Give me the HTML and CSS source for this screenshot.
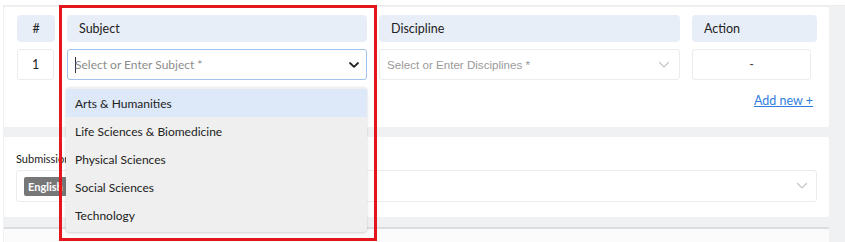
FILE: index.html
```html
<!DOCTYPE html>
<html>
<head>
<meta charset="utf-8">
<link rel="stylesheet" href="styles.css">
</head>
<body>
<div class="page">
  <div class="content">
    <section class="card card-table">
      <div class="grid">
        <div class="th th-num">#</div>
        <div class="th">Subject</div>
        <div class="th">Discipline</div>
        <div class="th">Action</div>

        <div class="td td-num">1</div>
        <div class="subject-cell">
          <div class="select select-active">
            <span class="caret"></span>
            <span class="placeholder">Select or Enter Subject *</span>
            <svg class="chev" width="12" height="8" viewBox="0 0 12 8"><path d="M2 2 L6 5.8 L10 2" fill="none" stroke="#222" stroke-width="1.8" stroke-linecap="round" stroke-linejoin="round"/></svg>
          </div>
          <ul class="menu">
            <li class="item active">Arts &amp; Humanities</li>
            <li class="item">Life Sciences &amp; Biomedicine</li>
            <li class="item">Physical Sciences</li>
            <li class="item">Social Sciences</li>
            <li class="item">Technology</li>
          </ul>
        </div>
        <div class="select select-plain">
          <span class="placeholder ph-sys">Select or Enter Disciplines *</span>
          <svg class="chev" width="12" height="8" viewBox="0 0 12 8"><path d="M1.5 1.5 L6 6 L10.5 1.5" fill="none" stroke="#c4c4c4" stroke-width="1.2" stroke-linecap="round"/></svg>
        </div>
        <div class="td td-action">-</div>
      </div>
      <div class="add-row"><a class="add-link" href="#">Add new +</a></div>
    </section>

    <section class="card card-lang">
      <div class="label">Submission Language</div>
      <div class="select select-plain lang-select">
        <span class="tag">English</span>
        <svg class="chev" width="12" height="8" viewBox="0 0 12 8"><path d="M1.5 1.5 L6 6 L10.5 1.5" fill="none" stroke="#c4c4c4" stroke-width="1.2" stroke-linecap="round"/></svg>
      </div>
    </section>
    <div class="bottom"></div>
  </div>
</div>
<div class="highlight"></div>
</body>
</html>
```

FILE: styles.css
```css
* { box-sizing: border-box; }
html, body { margin: 0; padding: 0; }
body {
  background: #ffffff;
  font-family: "Lato", "Noto Sans", sans-serif;
  color: #222;
  width: 845px;
  height: 242px;
  overflow: hidden;
  position: relative;
}
.page {
  margin: 5px 0 0 3px;
  background: #f0f1f3;
  border-top: 1px solid #ececec;
  height: 237px;
}
.content {
  width: 826px;
  padding: 1px 0 0 1px;
  display: flex;
  flex-direction: column;
}
.card {
  background: #fff;
  border-radius: 2px;
}
.card-table {
  height: 120px;
  padding: 8px 12px 0 13px;
}
.grid {
  display: grid;
  grid-template-columns: 38px 300px 301px 125px;
  column-gap: 12px;
  row-gap: 7px;
  grid-template-rows: 27px 31px;
}
.th {
  background: #e8eef7;
  border-radius: 4px;
  font-size: 12.5px;
  display: flex;
  align-items: center;
  padding-left: 12px;
  color: #222;
}
.th-num { justify-content: center; padding-left: 0; }
.td {
  border: 1px solid #ececec;
  border-radius: 3px;
  display: flex;
  align-items: center;
  justify-content: center;
  font-size: 12.5px;
}
.td-num { width: 37px; }
.td-action { width: 119px; color: #444; }
.subject-cell { position: relative; }
.select {
  height: 31px;
  border: 1px solid #ececec;
  border-radius: 3px;
  display: flex;
  align-items: center;
  padding-left: 7px;
  padding-right: 9px;
  position: relative;
}
.select-active {
  border: 1px solid #9fc3ee;
  padding-right: 6px;
}
.caret {
  width: 1px;
  height: 16px;
  background: #333;
  margin-right: -1px;
}
.placeholder {
  font-size: 12px;
  color: #8c8c8c;
  flex: 1;
}
.ph-sys {
  font-family: "Liberation Sans", "Roboto", sans-serif;
  color: #9a9a9a;
  font-size: 11.6px;
}
.chev { flex: none; }
.menu {
  position: absolute;
  top: 38px;
  left: -1px;
  width: 301px;
  height: 145px;
  margin: 0;
  padding: 2px 0 3px;
  list-style: none;
  background: #efefef;
  border-radius: 4px;
  box-shadow: 0 1px 3px rgba(0,0,0,0.18);
  z-index: 5;
}
.item {
  height: 28px;
  display: flex;
  align-items: center;
  padding-left: 9px;
  font-size: 12px;
  color: #222;
}
.item.active { background: #dde8f9; }
.add-row {
  display: flex;
  justify-content: flex-end;
  padding-right: 4px;
  margin-top: 13px;
}
.add-link {
  font-size: 12.5px;
  color: #2f7de1;
  text-decoration: underline;
}
.card-lang {
  margin-top: 10px;
  height: 80px;
  padding: 15px 12px 0 12px;
}
.label {
  font-size: 11px;
  color: #222;
  height: 13px;
  line-height: 13px;
  white-space: nowrap;
}
.lang-select {
  margin-top: 5px;
  height: 32px;
  padding-left: 7px;
  padding-right: 8px;
  justify-content: space-between;
}
.tag {
  background: #777;
  color: #fff;
  font-weight: bold;
  font-size: 11px;
  height: 19px;
  padding: 0 4px;
  display: flex;
  align-items: center;
  border-radius: 2px;
}
.bottom {
  margin-top: 10px;
  border-top: 2px solid #dcdde0;
  background: #fbfbfb;
  height: 20px;
}
.highlight {
  position: absolute;
  left: 59px;
  top: 5px;
  width: 318px;
  height: 236px;
  border: 3.5px solid #e4161d;
  z-index: 10;
  pointer-events: none;
}
```
